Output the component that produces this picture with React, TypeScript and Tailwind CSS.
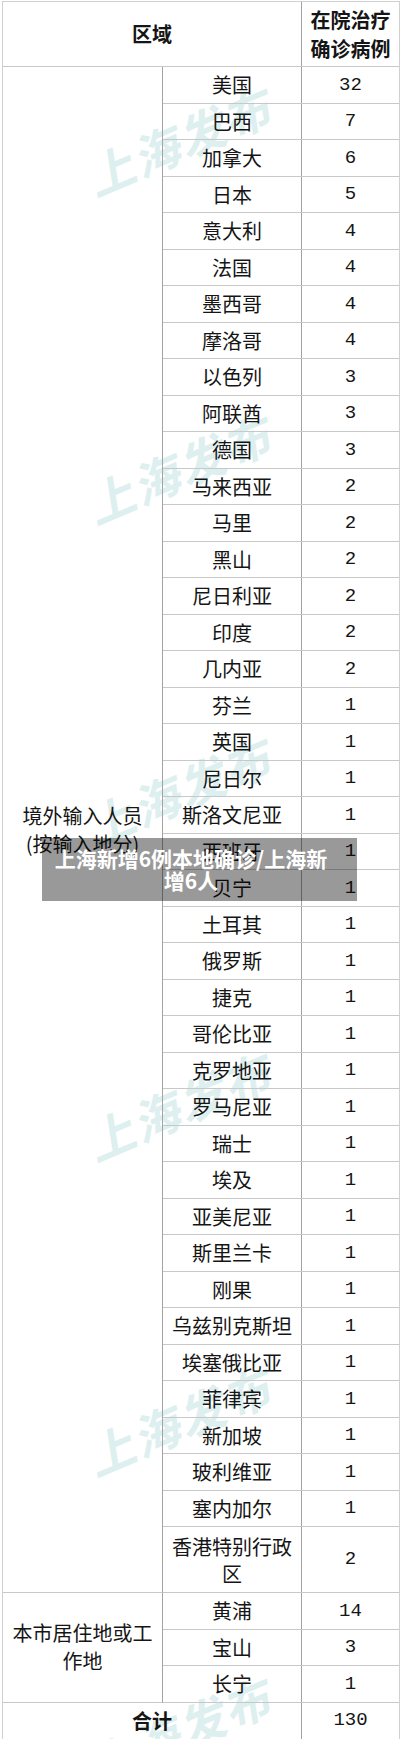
import React from "react";

type Row = { name: string; n: number; tall?: boolean };

const ABROAD: Row[] = [
  { name: "美国", n: 32 },
  { name: "巴西", n: 7 },
  { name: "加拿大", n: 6 },
  { name: "日本", n: 5 },
  { name: "意大利", n: 4 },
  { name: "法国", n: 4 },
  { name: "墨西哥", n: 4 },
  { name: "摩洛哥", n: 4 },
  { name: "以色列", n: 3 },
  { name: "阿联酋", n: 3 },
  { name: "德国", n: 3 },
  { name: "马来西亚", n: 2 },
  { name: "马里", n: 2 },
  { name: "黑山", n: 2 },
  { name: "尼日利亚", n: 2 },
  { name: "印度", n: 2 },
  { name: "几内亚", n: 2 },
  { name: "芬兰", n: 1 },
  { name: "英国", n: 1 },
  { name: "尼日尔", n: 1 },
  { name: "斯洛文尼亚", n: 1 },
  { name: "西班牙", n: 1 },
  { name: "贝宁", n: 1 },
  { name: "土耳其", n: 1 },
  { name: "俄罗斯", n: 1 },
  { name: "捷克", n: 1 },
  { name: "哥伦比亚", n: 1 },
  { name: "克罗地亚", n: 1 },
  { name: "罗马尼亚", n: 1 },
  { name: "瑞士", n: 1 },
  { name: "埃及", n: 1 },
  { name: "亚美尼亚", n: 1 },
  { name: "斯里兰卡", n: 1 },
  { name: "刚果", n: 1 },
  { name: "乌兹别克斯坦", n: 1 },
  { name: "埃塞俄比亚", n: 1 },
  { name: "菲律宾", n: 1 },
  { name: "新加坡", n: 1 },
  { name: "玻利维亚", n: 1 },
  { name: "塞内加尔", n: 1 },
  { name: "香港特别行政区", n: 2, tall: true },
];

const LOCAL: Row[] = [
  { name: "黄浦", n: 14 },
  { name: "宝山", n: 3 },
  { name: "长宁", n: 1 },
];

// watermark centres, roughly every 318px down the page
const MARKS = [
  "top-[140px]",
  "top-[468px]",
  "top-[790px]",
  "top-[1105px]",
  "top-[1420px]",
  "top-[1730px]",
];

function DataRow({ r }: { r: Row }) {
  return (
    <div className={"flex border-b border-[#c8c8c8] " + (r.tall ? "h-[66px]" : "h-[36.5px]")}>
      <div className="flex w-[139px] items-center justify-center border-r border-[#a3a3a3] px-2 text-center leading-[27px]">
        {r.name}
      </div>
      <div className="flex flex-1 items-center justify-center font-['Liberation_Mono',monospace] text-[19px]">
        {r.n}
      </div>
    </div>
  );
}

function Group({ label, rows }: { label: React.ReactNode; rows: Row[] }) {
  return (
    <div className="flex">
      <div className="flex w-[160px] items-center justify-center border-r border-b border-[#c8c8c8] border-r-[#a3a3a3] px-2 text-center leading-[28px]">
        {label}
      </div>
      <div className="flex flex-1 flex-col">
        {rows.map((r) => (
          <DataRow key={r.name} r={r} />
        ))}
      </div>
    </div>
  );
}

export default function App() {
  return (
    <div className="relative h-[1739px] w-[401px] overflow-hidden bg-white font-['Noto_Sans_CJK_SC',sans-serif] text-[20px] text-[#151515]">
      <div className="pointer-events-none absolute inset-0">
        {MARKS.map((t) => (
          <span
            key={t}
            className={
              "absolute left-[178px] -translate-x-1/2 -translate-y-1/2 -rotate-[23deg] whitespace-nowrap text-[47px] font-bold italic leading-none tracking-[2px] text-[#ddefef] " +
              t
            }
          >
            上海发布
          </span>
        ))}
      </div>

      <div className="relative ml-[2px] mt-px w-[398px] border border-[#d0d0d0]">
        <div className="flex h-[65px] border-b border-[#c8c8c8] font-bold">
          <div className="flex w-[299px] items-center justify-center border-r border-[#a3a3a3]">区域</div>
          <div className="flex flex-1 items-center justify-center px-1 text-center leading-[29px]">
            在院治疗
            <br />
            确诊病例
          </div>
        </div>

        <Group
          label={
            <span>
              境外输入人员
              <br />
              (按输入地分)
            </span>
          }
          rows={ABROAD}
        />
        <Group label={<span>本市居住地或工作地</span>} rows={LOCAL} />

        <div className="flex h-[36px]">
          <div className="flex w-[299px] items-center justify-center border-r border-[#a3a3a3] font-bold">合计</div>
          <div className="flex flex-1 items-center justify-center font-['Liberation_Mono',monospace] text-[19px]">
            130
          </div>
        </div>
      </div>

      <div className="absolute left-[42px] top-[838px] w-[315px] bg-black/40 pb-[10px] pl-[11px] pr-[28px] pt-[9px] text-center text-[21px] font-bold leading-[22px] text-white">
        上海新增6例本地确诊/上海新增6人
      </div>
    </div>
  );
}
